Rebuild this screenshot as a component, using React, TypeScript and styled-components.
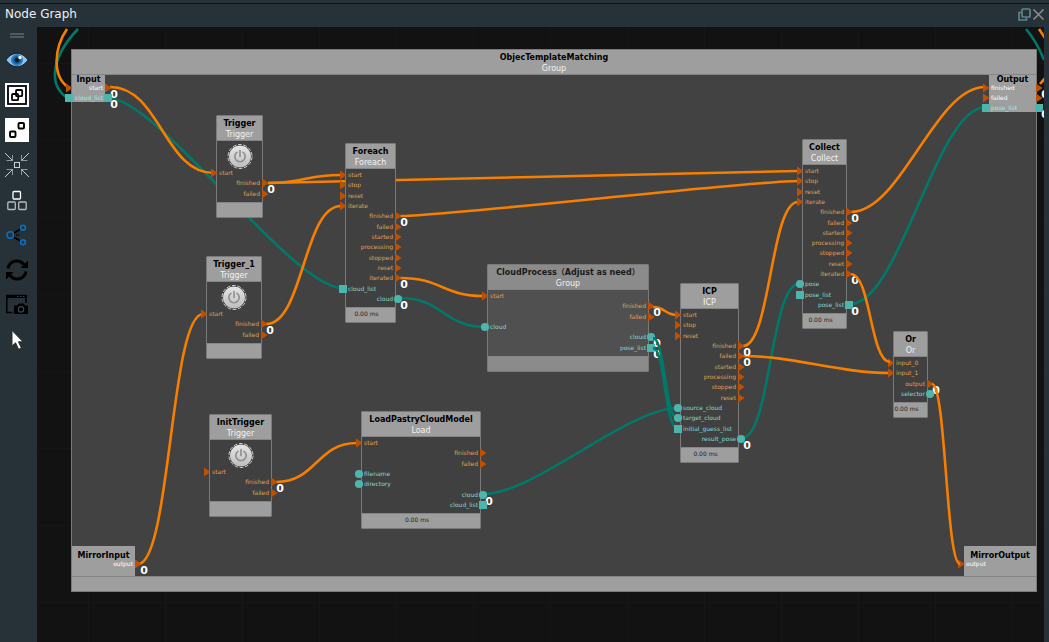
import React from "react";
import styled, { createGlobalStyle, css } from "styled-components";

type Side = "in" | "out" | "both";
type Shape = "signal" | "item" | "list";

interface PortData {
  label: string;
  side: Side;
  shape?: Shape;
  count?: boolean;
  align?: "left" | "right";
}

interface NodeData {
  name: string;
  type: string;
  x: number;
  y: number;
  w: number;
  h: number;
  ports: PortData[];
  time?: boolean;
  power?: boolean;
  dim?: boolean;
  raised?: boolean;
}

interface EdgeNodeData {
  name: string;
  x: number;
  y: number;
  w: number;
  h: number;
  pad: number;
  ports: PortData[];
}

const GlobalStyle = createGlobalStyle`
  * { box-sizing: border-box; }
  body {
    margin: 0;
    background: #263238;
    color: #eceff1;
    font-family: "DejaVu Sans", "Noto Sans CJK SC", sans-serif;
  }
  button { border: 0; padding: 0; background: none; color: inherit; font: inherit; }
`;

const Dock = styled.main`
  display: flex;
  flex-direction: column;
  height: 100vh;
  background: #263238;
`;

const TitleBar = styled.header`
  display: flex;
  align-items: center;
  justify-content: space-between;
  height: 24px;
  margin-top: 3px;
  padding: 0 4px 4px 5px;
  border-top: 1px solid #0d1214;
`;

const DockTitle = styled.h1`
  margin: 0;
  font-size: 12px;
  line-height: 16px;
  font-weight: 400;
`;

const DockActions = styled.div`
  display: flex;
  gap: 1px;
  margin-top: 2px;
`;

const DockButton = styled.button`
  display: flex;
  width: 13px;
  height: 13px;
`;

const Workspace = styled.div`
  display: flex;
  flex: 1;
  min-height: 0;
  padding-right: 5px;
`;

const Toolbar = styled.nav`
  display: flex;
  flex-direction: column;
  align-items: flex-start;
  gap: 11px;
  flex: 0 0 37px;
  padding: 6px 0 0 5px;
`;

const Handle = styled.div`
  width: 14px;
  height: 5px;
  margin: 0 5px -1px;
  border: solid #4f5a5f;
  border-width: 2px 0;
`;

const ToolButton = styled.button<{ $lit?: boolean }>`
  display: flex;
  width: 24px;
  height: 24px;
  background: ${(p) => (p.$lit ? "#ffffff" : "transparent")};
`;

const Canvas = styled.section`
  position: relative;
  flex: 1;
  min-width: 0;
  overflow: hidden;
  background-color: #121212;
  background-image: linear-gradient(#161616 1px, transparent 1px),
    linear-gradient(90deg, #161616 1px, transparent 1px);
  background-size: 77px 77px;
  background-position: 51px 36px;
`;

/* The scene is panned so that its origin lies above and left of the view. */
const Scene = styled.div`
  position: absolute;
  left: -37px;
  top: -27px;
  width: 100%;
  height: 100%;
`;

const WireLayer = styled.svg`
  position: absolute;
  left: 0;
  top: 0;
  width: 100%;
  height: 100%;
  overflow: visible;
  pointer-events: none;
  fill: none;
  stroke-width: 2.6;
`;

const placed = css<{ $x: number; $y: number; $w: number; $h: number }>`
  position: absolute;
  left: ${(p) => p.$x}px;
  top: ${(p) => p.$y}px;
  width: ${(p) => p.$w}px;
  height: ${(p) => p.$h}px;
`;

const NodeBox = styled.article<{
  $x: number;
  $y: number;
  $w: number;
  $h: number;
  $dim?: boolean;
}>`
  ${placed}
  display: flex;
  flex-direction: column;
  border: 1px solid #7a7a7a;
  border-radius: 1px;
  background: ${(p) => (p.$dim ? "#505050" : "#404040")};
  --plate: ${(p) => (p.$dim ? "#8b8b8b" : "#9e9e9e")};
  --title: ${(p) => (p.$dim ? "#1a1a1a" : "#000000")};
`;

const NodeHeader = styled.header`
  flex: 0 0 25px;
  padding-top: 3px;
  border-bottom: 1px solid #858585;
  background: var(--plate);
  text-align: center;
  white-space: nowrap;
`;

const NodeName = styled.h2`
  display: flex;
  justify-content: center;
  margin: 0;
  color: var(--title, #000000);
  font-size: 8px;
  line-height: 10px;
  font-weight: 700;
  white-space: nowrap;
`;

const NodeType = styled.p`
  margin: 0;
  color: #f2f2f2;
  font-size: 8px;
  line-height: 11px;
`;

const NodeBody = styled.div`
  display: flex;
  flex-direction: column;
  flex: 1;
  min-height: 0;
  padding: 1px 0 3px;
`;

const PortList = styled.ul`
  display: grid;
  grid-auto-rows: 1fr;
  flex: 1;
  margin: 0;
  padding: 0;
  list-style: none;
`;

const NodeFooter = styled.footer`
  flex: 0 0 15px;
  padding-right: 8px;
  border-top: 1px solid #858585;
  background: var(--plate);
  color: #1c1c1c;
  font-size: 6px;
  line-height: 12px;
  text-align: center;
  white-space: nowrap;
`;

const PowerButton = styled.button`
  display: flex;
  width: 26px;
  height: 26px;
  margin: 0 auto;
`;

const PortRow = styled.li<{ $right: boolean; $color: string }>`
  position: relative;
  display: flex;
  align-items: center;
  justify-content: ${(p) => (p.$right ? "flex-end" : "flex-start")};
  padding: 0 2px;
  color: ${(p) => p.$color};
  font-size: 6px;
  line-height: 10px;
  white-space: nowrap;
`;

const PortMark = styled.svg<{ $out?: boolean; $signal?: boolean }>`
  position: absolute;
  top: calc(50% - 4px);
  ${(p) => (p.$out ? "right" : "left")}: ${(p) => (p.$signal ? "-6px" : "-7px")};
  width: ${(p) => (p.$signal ? "6px" : "8px")};
  height: 8px;
  overflow: visible;
`;

const Count = styled.span`
  position: absolute;
  top: 50%;
  right: -13px;
  color: #ffffff;
  font-size: 11px;
  line-height: 13px;
  font-weight: 700;
  text-shadow: 0 0 1px #222222;
`;

const GroupBox = styled.section`
  ${placed}
  display: flex;
  flex-direction: column;
  border: 1px solid #7a7a7a;
  background: #424242;
  --plate: #9e9e9e;
`;

const GroupFill = styled.div`
  flex: 1;
`;

const EdgeNodeBox = styled.article<{
  $x: number;
  $y: number;
  $w: number;
  $h: number;
  $pad: number;
}>`
  ${placed}
  display: flex;
  flex-direction: column;
  padding-top: ${(p) => p.$pad}px;
  background: #9e9e9e;
`;

const EdgeName = styled(NodeName)`
  line-height: 7px;
`;

const EdgePorts = styled(PortList)`
  flex: none;
  grid-auto-rows: 10px;
`;

const sig = (label: string, side: Side, count = false): PortData => ({ label, side, count });
const item = (label: string, side: Side, count = false): PortData => ({ label, side, shape: "item", count });
const list = (label: string, side: Side, count = false): PortData => ({ label, side, shape: "list", count });

const nodes: NodeData[] = [
  {
    name: "Trigger", type: "Trigger", x: 216, y: 115, w: 47, h: 103, power: true,
    ports: [sig("start", "in"), sig("finished", "out", true), sig("failed", "out")],
  },
  {
    name: "Trigger_1", type: "Trigger", x: 206, y: 256, w: 56, h: 103, power: true,
    ports: [sig("start", "in"), sig("finished", "out", true), sig("failed", "out")],
  },
  {
    name: "InitTrigger", type: "Trigger", x: 209, y: 414, w: 63, h: 103, power: true,
    ports: [sig("start", "in"), sig("finished", "out", true), sig("failed", "out")],
  },
  {
    name: "Foreach", type: "Foreach", x: 345, y: 143, w: 51, h: 180, time: true,
    ports: [
      sig("start", "in"), sig("stop", "in"), sig("reset", "in"), sig("iterate", "in"),
      sig("finished", "out", true), sig("failed", "out"), sig("started", "out"),
      sig("processing", "out"), sig("stopped", "out"), sig("reset", "out"),
      sig("iterated", "out", true), list("cloud_list", "in"), item("cloud", "out", true),
    ],
  },
  {
    name: "LoadPastryCloudModel", type: "Load", x: 361, y: 411, w: 120, h: 118, time: true,
    ports: [
      sig("start", "in"), sig("finished", "out"), sig("failed", "out"),
      item("filename", "in"), item("directory", "in"),
      item("cloud", "out", true), list("cloud_list", "out"),
    ],
  },
  {
    name: "CloudProcess（Adjust as need）", type: "Group", x: 487, y: 264, w: 162, h: 108, dim: true,
    ports: [
      sig("start", "in"), sig("finished", "out", true), sig("failed", "out"),
      item("cloud", "in"), item("cloud", "out", true), list("pose_list", "out", true),
    ],
  },
  {
    name: "ICP", type: "ICP", x: 680, y: 283, w: 59, h: 180, time: true, raised: true,
    ports: [
      sig("start", "in"), sig("stop", "in"), sig("reset", "in"),
      sig("finished", "out", true), sig("failed", "out", true), sig("started", "out"),
      sig("processing", "out"), sig("stopped", "out"), sig("reset", "out"),
      item("source_cloud", "in"), item("target_cloud", "in"),
      list("initial_guess_list", "in"), item("result_pose", "out", true),
    ],
  },
  {
    name: "Collect", type: "Collect", x: 802, y: 139, w: 45, h: 190, time: true,
    ports: [
      sig("start", "in"), sig("stop", "in"), sig("reset", "in"), sig("iterate", "in"),
      sig("finished", "out", true), sig("failed", "out"), sig("started", "out"),
      sig("processing", "out"), sig("stopped", "out"), sig("reset", "out"),
      sig("iterated", "out", true), item("pose", "in"), list("pose_list", "in"),
      list("pose_list", "out", true),
    ],
  },
  {
    name: "Or", type: "Or", x: 893, y: 331, w: 35, h: 87, time: true,
    ports: [
      sig("input_0", "in"), sig("input_1", "in"),
      sig("output", "out", true), item("selector", "out"),
    ],
  },
];

const edgeNodes: EdgeNodeData[] = [
  {
    name: "Input", x: 72, y: 75, w: 33, h: 27, pad: 1,
    ports: [
      { ...sig("start", "both", true), align: "right" },
      { ...list("cloud_list", "both", true), align: "right" },
    ],
  },
  {
    name: "Output", x: 989, y: 75, w: 47, h: 37, pad: 1,
    ports: [
      { ...sig("finished", "both", true), align: "left" },
      sig("failed", "both"),
      { ...list("pose_list", "both", true), align: "left" },
    ],
  },
  { name: "MirrorInput", x: 72, y: 546, w: 63, h: 30, pad: 6, ports: [sig("output", "out", true)] },
  { name: "MirrorOutput", x: 964, y: 546, w: 72, h: 30, pad: 6, ports: [sig("output", "in")] },
];

type Wire = [number, number, number, number];

const dataWires: Wire[] = [
  [108, 98, 342, 288],
  [400, 298, 486, 327],
  [484, 494, 678, 408],
  [742, 438, 799, 284],
  [850, 304, 986, 107],
];

const signalWires: Wire[] = [
  [110, 87, 214, 173],
  [268, 183, 341, 175],
  [268, 183, 798, 171],
  [400, 216, 798, 181],
  [266, 324, 341, 206],
  [138, 564, 203, 314],
  [276, 482, 357, 443],
  [400, 278, 484, 296],
  [653, 307, 677, 315],
  [743, 346, 798, 202],
  [743, 356, 890, 373],
  [851, 212, 985, 87],
];

const frontDataWires: Wire[] = [
  [653, 338, 677, 418],
  [653, 348, 677, 428],
];

const frontSignalWires: Wire[] = [
  [851, 274, 890, 362],
  [932, 384, 960, 564],
];

const SIGNAL_WIRE = "#f77f00";
const DATA_WIRE = "#00796b";
const MAX_BEND = 50;

function curve([x1, y1, x2, y2]: Wire) {
  const bend = Math.min((x2 - x1) / 2, MAX_BEND);
  return `M${x1} ${y1}C${x1 + bend} ${y1} ${x2 - bend} ${y2} ${x2} ${y2}`;
}

function Wires({ data, signal, children }: { data: Wire[]; signal: Wire[]; children?: React.ReactNode }) {
  return (
    <WireLayer aria-hidden="true">
      <g stroke={DATA_WIRE}>{data.map((w) => <path key={w.join()} d={curve(w)} />)}</g>
      <g stroke={SIGNAL_WIRE}>{signal.map((w) => <path key={w.join()} d={curve(w)} />)}</g>
      {children}
    </WireLayer>
  );
}

function Mark({ shape, out }: { shape: Shape; out?: boolean }) {
  if (shape === "signal") {
    return (
      <PortMark $out={out} $signal viewBox="0 0 6 8">
        <path d="M0 -.5L6.6 4L0 8.5Z" fill="#bf5000" />
      </PortMark>
    );
  }
  return (
    <PortMark $out={out} viewBox="0 0 8 8" fill="#4db6ac">
      {shape === "item" ? <circle cx="4" cy="4" r="4.1" /> : <rect width="8" height="8" />}
    </PortMark>
  );
}

function Port({ port, onPlate }: { port: PortData; onPlate?: boolean }) {
  const shape = port.shape ?? "signal";
  const right = port.align ? port.align === "right" : port.side === "out";
  const signalColor = onPlate ? "#ffffff" : "#dfa257";
  const dataColor = onPlate ? "#8ff0e4" : "#86d8d0";
  return (
    <PortRow $right={right} $color={shape === "signal" ? signalColor : dataColor}>
      {port.side !== "out" && <Mark shape={shape} />}
      {port.label}
      {port.side !== "in" && <Mark shape={shape} out />}
      {port.count && <Count>0</Count>}
    </PortRow>
  );
}

function Power() {
  return (
    <PowerButton aria-label="Trigger">
      <svg width="26" height="26" viewBox="0 0 26 26" fill="none" overflow="visible">
        <defs>
          <linearGradient id="knob" x1="0" y1="0" x2="0" y2="1">
            <stop offset="0" stopColor="#e6e6e6" />
            <stop offset="1" stopColor="#bdbdbd" />
          </linearGradient>
        </defs>
        <circle cx="13" cy="14.5" r="12.4" fill="#2a2a2a" />
        <circle cx="13" cy="14.5" r="12" stroke="#ffffff" strokeWidth=".8" strokeDasharray="4 1.4" />
        <circle cx="13" cy="14.5" r="11" fill="url(#knob)" />
        <path d="M10 10.3a5.2 5.2 0 1 0 6 0M13 8.5v6" stroke="#8d8d8d" strokeWidth="1.6" strokeLinecap="round" />
      </svg>
    </PowerButton>
  );
}

function GraphNode({ node }: { node: NodeData }) {
  return (
    <NodeBox $x={node.x} $y={node.y} $w={node.w} $h={node.h} $dim={node.dim}>
      <NodeHeader>
        <NodeName>{node.name}</NodeName>
        <NodeType>{node.type}</NodeType>
      </NodeHeader>
      <NodeBody>
        {node.power && <Power />}
        <PortList>
          {node.ports.map((p) => <Port key={p.side + p.label} port={p} />)}
        </PortList>
      </NodeBody>
      <NodeFooter>{node.time ? "0.00 ms" : null}</NodeFooter>
    </NodeBox>
  );
}

function EdgeNode({ node }: { node: EdgeNodeData }) {
  return (
    <EdgeNodeBox $x={node.x} $y={node.y} $w={node.w} $h={node.h} $pad={node.pad}>
      <EdgeName>{node.name}</EdgeName>
      <EdgePorts>
        {node.ports.map((p) => <Port key={p.label} port={p} onPlate />)}
      </EdgePorts>
    </EdgeNodeBox>
  );
}

const EyeIcon = () => (
  <svg width="24" height="24" viewBox="0 0 24 24">
    <path d="M.8 12Q6 5.2 12 5.2T23.2 12Q18 18.8 12 18.8T.8 12Z" fill="#90c4ef" stroke="#15202b" />
    <circle cx="12" cy="12" r="5.8" fill="#1565a8" />
    <circle cx="12" cy="12" r="5" fill="none" stroke="#2f83cc" strokeWidth="1.4" />
    <circle cx="12" cy="12" r="2.5" fill="#10202e" />
    <circle cx="15" cy="9.5" r="1.7" fill="#ffffff" />
  </svg>
);

const GroupIcon = () => (
  <svg width="24" height="24" viewBox="0 0 24 24" fill="none" stroke="#000000" strokeWidth="1.8">
    <rect x="3" y="3" width="18" height="18" />
    <rect x="11" y="7" width="6.2" height="6.2" rx="1" />
    <rect x="7" y="11" width="6.2" height="6.2" rx="1" />
  </svg>
);

const UngroupIcon = () => (
  <svg width="24" height="24" viewBox="0 0 24 24" fill="none" stroke="#000000" strokeWidth="1.9">
    <rect x="13.5" y="5" width="5.5" height="5.5" rx="1" />
    <rect x="5" y="13.5" width="5.5" height="5.5" rx="1" />
  </svg>
);

const CollapseIcon = () => (
  <svg width="24" height="24" viewBox="0 0 24 24" fill="none" stroke="#c9d0d3" strokeWidth="1">
    <rect x="9.5" y="9.5" width="5" height="5" />
    <path d="M0 0L8 8M24 0L16 8M0 24L8 16M24 24L16 16" />
    <path d="M7.5 2V7.5H1.5M16.5 2V7.5H22.5M7.5 22V16.5H1.5M16.5 22V16.5H22.5" stroke="#8e999e" />
  </svg>
);

const BlocksIcon = () => (
  <svg width="24" height="24" viewBox="0 0 24 24" fill="none" strokeWidth="1.3">
    <rect x="8" y="3.5" width="7.5" height="7.5" rx="1" stroke="#ffffff" />
    <rect x="2.8" y="14" width="7.5" height="7.5" rx="1" stroke="#b6bdc0" />
    <rect x="13.7" y="14" width="7.5" height="7.5" rx="1" stroke="#b6bdc0" />
  </svg>
);

const ShareIcon = () => (
  <svg width="24" height="24" viewBox="0 0 24 24" fill="none" strokeWidth="1.6">
    <path d="M8.3 10.5L15.5 6M8.3 14L15.5 18" stroke="#000000" />
    <path d="M9 12H14" stroke="#000000" strokeDasharray="1 1" />
    <g stroke="#0b6fbf">
      <circle cx="5.3" cy="12" r="3.3" />
      <circle cx="18" cy="4.7" r="2.4" />
      <circle cx="18" cy="19.3" r="2.4" />
    </g>
  </svg>
);

const RefreshIcon = () => (
  <svg width="24" height="24" viewBox="0 0 24 24" fill="none" stroke="#000000" strokeWidth="3">
    <path d="M3 10.5C4.5 2.5 14 0.5 19 6.5M21 13.5C19.5 21.5 10 23.5 5 17.5" />
    <path d="M23 2.5V10H15.5ZM1 21.5V14H8.5Z" fill="#000000" stroke="none" />
  </svg>
);

const SnapshotIcon = () => (
  <svg width="24" height="24" viewBox="0 0 24 24" fill="none">
    <path d="M7.5 19.5H1.8V2.5H21V10" stroke="#000000" strokeWidth="1.5" />
    <path d="M1 2H22V5H1Z" fill="#000000" />
    <path d="M12 3.5H21" stroke="#455a64" strokeWidth="0.8" strokeDasharray="1.5 1.5" />
    <path d="M9 12.5H12L13.5 10.5H18.5L20 12.5H23V21H9Z" fill="#000000" />
    <circle cx="16" cy="16.4" r="2.7" stroke="#37474f" strokeWidth="1.2" />
  </svg>
);

const CursorIcon = () => (
  <svg width="24" height="24" viewBox="0 0 24 24">
    <path
      d="M7 2.5V18L10.6 14.8L13.6 21.3L16.4 20L13.4 13.8H18Z"
      fill="#ffffff"
      stroke="#20262a"
      strokeWidth="0.9"
    />
  </svg>
);

const tools = [
  { label: "Toggle visibility", icon: <EyeIcon /> },
  { label: "Group nodes", icon: <GroupIcon />, lit: true },
  { label: "Ungroup nodes", icon: <UngroupIcon />, lit: true },
  { label: "Collapse", icon: <CollapseIcon /> },
  { label: "Arrange nodes", icon: <BlocksIcon /> },
  { label: "Connections", icon: <ShareIcon /> },
  { label: "Refresh", icon: <RefreshIcon /> },
  { label: "Snapshot", icon: <SnapshotIcon /> },
  { label: "Select", icon: <CursorIcon /> },
];

export default function App() {
  return (
    <>
      <GlobalStyle />
      <Dock>
        <TitleBar>
          <DockTitle>Node Graph</DockTitle>
          <DockActions>
            <DockButton aria-label="Float">
              <svg width="13" height="13" viewBox="0 0 13 13" fill="none" stroke="#5f8589" strokeWidth="1.7">
                <rect x="4" y="1" width="8" height="8" rx="1" />
                <path d="M3.5 4.5H1V12H8.5V9.5" />
              </svg>
            </DockButton>
            <DockButton aria-label="Close">
              <svg width="13" height="13" viewBox="0 0 13 13" stroke="#8a8a8a" strokeWidth="1.6">
                <path d="M1.5 1.5L11.5 11.5M11.5 1.5L1.5 11.5" />
              </svg>
            </DockButton>
          </DockActions>
        </TitleBar>
        <Workspace>
          <Toolbar aria-label="Graph tools">
            <Handle />
            {tools.map((t) => (
              <ToolButton key={t.label} aria-label={t.label} $lit={t.lit}>{t.icon}</ToolButton>
            ))}
          </Toolbar>
          <Canvas aria-label="Graph canvas">
            <Scene>
              <GroupBox $x={71} $y={49} $w={966} $h={543}>
                <NodeHeader>
                  <NodeName>ObjecTemplateMatching</NodeName>
                  <NodeType>Group</NodeType>
                </NodeHeader>
                <GroupFill />
                <NodeFooter />
              </GroupBox>
              <Wires data={dataWires} signal={signalWires}>
                <g stroke={DATA_WIRE}>
                  <path d="M78 29C52 56 48 84 66 97" />
                  <path d="M1026 29Q1037 42 1044 60" />
                </g>
                <g stroke={SIGNAL_WIRE}>
                  <path d="M67 29C54 48 52 76 68 87" />
                  <path d="M1039 29L1045 38" />
                  <path d="M1040 84L1045 78" />
                </g>
              </Wires>
              {edgeNodes.map((n) => <EdgeNode key={n.name} node={n} />)}
              {nodes.filter((n) => !n.raised).map((n) => <GraphNode key={n.name} node={n} />)}
              <Wires data={frontDataWires} signal={frontSignalWires} />
              {nodes.filter((n) => n.raised).map((n) => <GraphNode key={n.name} node={n} />)}
            </Scene>
          </Canvas>
        </Workspace>
      </Dock>
    </>
  );
}
